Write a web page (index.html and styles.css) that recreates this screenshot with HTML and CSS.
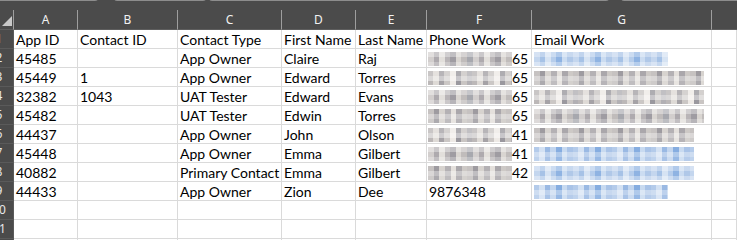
FILE: index.html
```html
<!DOCTYPE html>
<html>
<head>
<meta charset="utf-8">
<link rel="stylesheet" href="styles.css">
</head>
<body>
<div class="topband">
  <div class="tab t1"></div>
  <div class="tab t2"></div>
  <div class="tab t3"></div>
  <div class="tab t4"></div>
</div>
<div class="sheet">
  <div class="ch corner"><span class="tri"></span></div>
  <div class="ch">A</div><div class="ch">B</div><div class="ch">C</div><div class="ch">D</div><div class="ch">E</div><div class="ch">F</div><div class="ch">G</div><div class="ch last"></div>

  <div class="rh"><span>1</span></div>
  <div class="c">App ID</div><div class="c">Contact ID</div><div class="c">Contact Type</div><div class="c">First Name</div><div class="c">Last Name</div><div class="c">Phone Work</div><div class="c">Email Work</div><div class="c"></div>

  <div class="rh"><span>2</span></div>
  <div class="c">45485</div><div class="c"></div><div class="c">App Owner</div><div class="c">Claire</div><div class="c">Raj</div><div class="c ph"><span class="blur bg1"></span>65</div><div class="c em"><span class="blur bb1 w1"></span></div><div class="c"></div>

  <div class="rh"><span>3</span></div>
  <div class="c">45449</div><div class="c">1</div><div class="c">App Owner</div><div class="c">Edward</div><div class="c">Torres</div><div class="c ph"><span class="blur bg2"></span>65</div><div class="c em"><span class="blur bg3 w2"></span></div><div class="c"></div>

  <div class="rh"><span>4</span></div>
  <div class="c">32382</div><div class="c">1043</div><div class="c">UAT Tester</div><div class="c">Edward</div><div class="c">Evans</div><div class="c ph"><span class="blur bg1"></span>65</div><div class="c em"><span class="blur bg2 w2"></span></div><div class="c"></div>

  <div class="rh"><span>5</span></div>
  <div class="c">45482</div><div class="c"></div><div class="c">UAT Tester</div><div class="c">Edwin</div><div class="c">Torres</div><div class="c ph"><span class="blur bg3"></span>65</div><div class="c em"><span class="blur bg1 w2"></span></div><div class="c"></div>

  <div class="rh"><span>6</span></div>
  <div class="c">44437</div><div class="c"></div><div class="c">App Owner</div><div class="c">John</div><div class="c">Olson</div><div class="c ph"><span class="blur bg2"></span>41</div><div class="c em"><span class="blur bg3 w3"></span></div><div class="c"></div>

  <div class="rh"><span>7</span></div>
  <div class="c">45448</div><div class="c"></div><div class="c">App Owner</div><div class="c">Emma</div><div class="c">Gilbert</div><div class="c ph"><span class="blur bg1"></span>41</div><div class="c em"><span class="blur bb2 w3"></span></div><div class="c"></div>

  <div class="rh"><span>8</span></div>
  <div class="c">40882</div><div class="c"></div><div class="c">Primary Contact</div><div class="c">Emma</div><div class="c">Gilbert</div><div class="c ph"><span class="blur bg3"></span>42</div><div class="c em"><span class="blur bb1 w3"></span></div><div class="c"></div>

  <div class="rh"><span>9</span></div>
  <div class="c">44433</div><div class="c"></div><div class="c">App Owner</div><div class="c">Zion</div><div class="c">Dee</div><div class="c">9876348</div><div class="c em"><span class="blur bb2 w1"></span></div><div class="c"></div>

  <div class="rh"><span>10</span></div>
  <div class="c"></div><div class="c"></div><div class="c"></div><div class="c"></div><div class="c"></div><div class="c"></div><div class="c"></div><div class="c"></div>

  <div class="rh"><span>11</span></div>
  <div class="c"></div><div class="c"></div><div class="c"></div><div class="c"></div><div class="c"></div><div class="c"></div><div class="c"></div><div class="c"></div>

  <div class="rh"><span>12</span></div>
  <div class="c"></div><div class="c"></div><div class="c"></div><div class="c"></div><div class="c"></div><div class="c"></div><div class="c"></div><div class="c"></div>
</div>
</body>
</html>
```

FILE: styles.css
```css
html, body {
  margin: 0;
  padding: 0;
  background: #ffffff;
  overflow: hidden;
}
body {
  width: 737px;
  height: 240px;
}
.topband {
  height: 10px;
  background: #4b4b4b;
  display: flex;
  align-items: flex-start;
  overflow: hidden;
}
.tab {
  height: 2px;
  margin-top: -2px;
  border: 1px solid #8d8d8d;
  border-top: none;
  border-radius: 0 0 5px 5px;
  background: #2f2f2f;
  flex: none;
}
.t1 { width: 104px; margin-left: -8px; }
.t2 { width: 90px; margin-left: 16px; }
.t3 { width: 398px; margin-left: 3px; }
.t4 { width: 140px; margin-left: 12px; }

.sheet {
  display: grid;
  grid-template-columns: 14px 64px 100px 104px 74px 71px 105px 180px 1fr;
  grid-template-rows: 20px;
  grid-auto-rows: 19px;
}
.ch {
  background: #4b4b4b;
  color: #f2f2f2;
  font-family: "Noto Sans", "Open Sans", sans-serif;
  font-size: 12px;
  line-height: 19px;
  text-align: center;
  box-sizing: border-box;
  border-right: 1px solid #9e9e9e;
  border-bottom: 1px solid #5e5e5e;
}
.ch.last { border-right: none; }
.corner { position: relative; border-right-color: #9e9e9e; }
.tri {
  position: absolute;
  right: 1px;
  bottom: 3px;
  width: 0;
  height: 0;
  border-left: 10px solid transparent;
  border-bottom: 10px solid #c9c9c9;
}
.rh {
  background: #4b4b4b;
  color: #e8e8e8;
  font-family: "Noto Sans", "Open Sans", sans-serif;
  font-size: 12px;
  line-height: 18px;
  box-sizing: border-box;
  border-bottom: 1px solid #5a5a5a;
  border-right: 1px solid #5a5a5a;
  overflow: hidden;
  display: flex;
}
.rh span {
  flex: none;
  width: 26px;
  margin-left: -14px;
  text-align: center;
}
.c {
  box-sizing: border-box;
  border-right: 1px solid #dadada;
  border-bottom: 1px solid #dadada;
  font-family: "Lato", sans-serif;
  font-size: 14px;
  line-height: 18px;
  color: #000000;
  padding: 1px 0 0 2px;
  white-space: nowrap;
  overflow: visible;
  display: flex;
  align-items: center;
}
.ph { padding-left: 1px; }
.em { padding-left: 2px; }
.blur {
  display: block;
  height: 14px;
  flex: none;
}
.ph .blur { width: 84px; }
.w1 { width: 134px; }
.w2 { width: 170px; }
.w3 { width: 160px; }

.bg1 {
  background:
    linear-gradient(180deg, rgba(255,255,255,0.35) 0 5px, rgba(0,0,0,0) 5px 10px, rgba(255,255,255,0.25) 10px),
    repeating-linear-gradient(90deg, #d2cecd 0 6px, #aeaaae 6px 11px, #e2dfdb 11px 17px, #b9b5b7 17px 22px, #9f9ca2 22px 28px, #d9d5d1 28px 33px, #c0bcbb 33px 39px, #a7a8ae 39px 45px);
}
.bg2 {
  background:
    linear-gradient(180deg, rgba(255,255,255,0.2) 0 5px, rgba(255,255,255,0.45) 5px 10px, rgba(0,0,0,0) 10px),
    repeating-linear-gradient(90deg, #bcb8b8 0 5px, #dedad6 5px 11px, #a5a2a6 11px 16px, #cbc7c5 16px 22px, #eeeae6 22px 28px, #9a989e 28px 33px, #c9c5c3 33px 39px, #b2b0b4 39px 44px);
}
.bg3 {
  background:
    linear-gradient(180deg, rgba(0,0,0,0) 0 5px, rgba(255,255,255,0.35) 5px 10px, rgba(255,255,255,0.15) 10px),
    repeating-linear-gradient(90deg, #c6c2c1 0 6px, #9e9ba0 6px 11px, #d7d3cf 11px 17px, #b4b1b4 17px 23px, #e4e0dc 23px 28px, #aaa7ab 28px 34px, #cdc9c6 34px 39px);
}
.bb1 {
  background:
    linear-gradient(180deg, rgba(255,255,255,0.3) 0 5px, rgba(0,0,0,0) 5px 10px, rgba(255,255,255,0.35) 10px),
    repeating-linear-gradient(90deg, #c4d6ee 0 6px, #a6c2e6 6px 11px, #d6e3f3 11px 17px, #b6cdeb 17px 22px, #8fb3e2 22px 28px, #cbdcf1 28px 33px, #b0c8e8 33px 39px);
}
.bb2 {
  background:
    linear-gradient(180deg, rgba(0,0,0,0) 0 5px, rgba(255,255,255,0.35) 5px 10px, rgba(255,255,255,0.15) 10px),
    repeating-linear-gradient(90deg, #b4cbea 0 5px, #d3e1f3 5px 11px, #9ab9e3 11px 16px, #c2d5ee 16px 22px, #86ade0 22px 28px, #c8daf0 28px 33px, #a9c3e7 33px 39px);
}
```
